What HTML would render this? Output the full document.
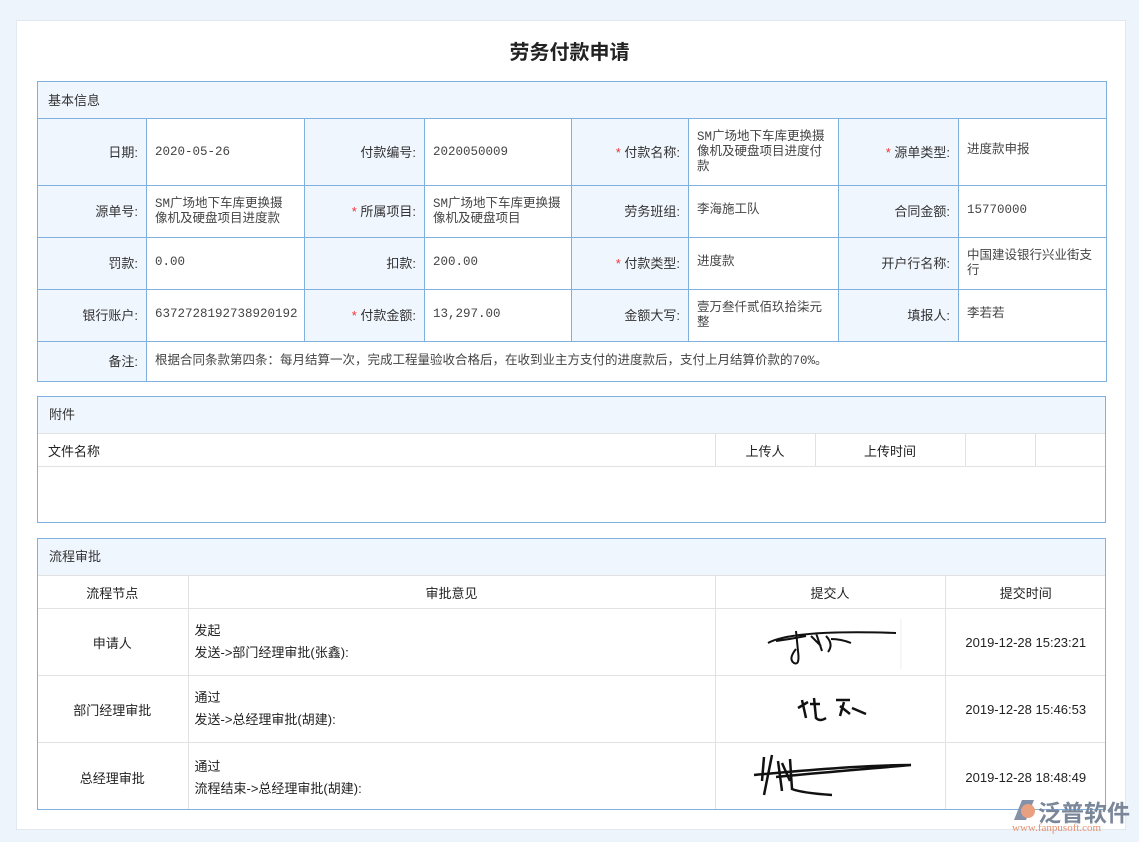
<!DOCTYPE html>
<html><head><meta charset="utf-8"><style>
*{margin:0;padding:0;box-sizing:border-box}
body{width:1139px;height:842px;background:#eef4fc;font-family:"Liberation Sans","Noto Sans CJK SC",sans-serif;font-size:12px;color:#333;position:relative;overflow:hidden}
.card{position:absolute;left:16px;top:20px;width:1110px;height:810px;background:#fff;border:1px solid #e2e8f0}
h1{position:absolute;left:0;top:36px;width:1139px;text-align:center;font-size:20px;font-weight:bold;color:#222;font-family:"Noto Sans CJK SC",sans-serif}
.a{position:absolute}
table{border-collapse:collapse;table-layout:fixed;position:absolute}
.b td{border:1px solid #7fb0de;vertical-align:middle;font-size:13px;line-height:15px;overflow:hidden}
.b td.l{background:#f0f6fe;text-align:right;padding-right:8px;color:#333}
.b td.v{padding:0 10px 0 8px;color:#444;font-family:"Liberation Mono","Noto Sans CJK SC",monospace;font-size:12.5px}
.b td.h{background:#f0f6fe;padding-left:10px;height:37px;color:#333}
.r{color:#e33}
.box{position:absolute;left:37px;width:1069px;border:1px solid #7fb0de;overflow:hidden}
.box .hd{height:37px;background:#f0f6fe;padding-left:11px;line-height:36px;border-bottom:1px solid #e2e2e2;font-size:13px}
.g td{border:1px solid #e2e2e2;font-size:13px;color:#222}
</style></head><body>
<div class="card"></div>
<h1>劳务付款申请</h1>
<table class="b" style="left:37px;top:81px;width:1069px">
<colgroup><col style="width:109px"><col style="width:158px"><col style="width:120px"><col style="width:147px"><col style="width:117px"><col style="width:150px"><col style="width:120px"><col style="width:148px"></colgroup>
<tr><td class="h" colspan="8">基本信息</td></tr>
<tr style="height:67px"><td class="l">日期:</td><td class="v">2020-05-26</td><td class="l">付款编号:</td><td class="v">2020050009</td><td class="l"><span class="r">*</span> 付款名称:</td><td class="v">SM广场地下车库更换摄像机及硬盘项目进度付款</td><td class="l"><span class="r">*</span> 源单类型:</td><td class="v" style="vertical-align:top;padding-top:24px">进度款申报</td></tr>
<tr style="height:52px"><td class="l">源单号:</td><td class="v">SM广场地下车库更换摄像机及硬盘项目进度款</td><td class="l"><span class="r">*</span> 所属项目:</td><td class="v">SM广场地下车库更换摄像机及硬盘项目</td><td class="l">劳务班组:</td><td class="v" style="vertical-align:top;padding-top:17px">李海施工队</td><td class="l">合同金额:</td><td class="v" style="vertical-align:top;padding-top:17px">15770000</td></tr>
<tr style="height:52px"><td class="l">罚款:</td><td class="v" style="vertical-align:top;padding-top:17px">0.00</td><td class="l">扣款:</td><td class="v" style="vertical-align:top;padding-top:17px">200.00</td><td class="l"><span class="r">*</span> 付款类型:</td><td class="v" style="vertical-align:top;padding-top:17px">进度款</td><td class="l">开户行名称:</td><td class="v">中国建设银行兴业街支行</td></tr>
<tr style="height:52px"><td class="l">银行账户:</td><td class="v" style="vertical-align:top;padding-top:17px">6372728192738920192</td><td class="l"><span class="r">*</span> 付款金额:</td><td class="v" style="vertical-align:top;padding-top:17px">13,297.00</td><td class="l">金额大写:</td><td class="v">壹万叁仟贰佰玖拾柒元整</td><td class="l">填报人:</td><td class="v" style="vertical-align:top;padding-top:17px">李若若</td></tr>
<tr style="height:40px"><td class="l">备注:</td><td class="v" colspan="7">根据合同条款第四条：每月结算一次，完成工程量验收合格后，在收到业主方支付的进度款后，支付上月结算价款的70%。</td></tr>
</table>

<div class="box" style="top:396px;height:127px">
<div class="hd">附件</div>
<table class="g" style="left:-1px;top:36px;width:1069px"><colgroup><col style="width:678px"><col style="width:100px"><col style="width:150px"><col style="width:70px"><col style="width:71px"></colgroup>
<tr style="height:33px"><td style="padding-left:11px;border-left:none">文件名称</td><td style="text-align:center">上传人</td><td style="text-align:center">上传时间</td><td></td><td style="border-right:none"></td></tr></table>
</div>

<div class="box" style="top:538px;height:272px">
<div class="hd">流程审批</div>
<table class="g" style="left:-1px;top:36px;width:1069px"><colgroup><col style="width:151px"><col style="width:527px"><col style="width:230px"><col style="width:161px"></colgroup>
<tr style="height:33px;text-align:center"><td style="border-left:none">流程节点</td><td>审批意见</td><td>提交人</td><td style="border-right:none">提交时间</td></tr>
<tr style="height:67px"><td style="text-align:center;border-left:none">申请人</td><td style="padding-left:6px;line-height:22px">发起<br>发送-&gt;部门经理审批(张鑫):</td><td><svg width="230" height="60"><path d="M52 32 C70 22 120 20 180 22 M60 30 Q75 28 90 25 M80 20 L82 40 Q84 55 78 52 Q72 48 80 38 M95 25 l10 10 M100 22 l6 18 M110 25 q8 8 2 16 M115 28 q10 0 20 4" stroke="#111" stroke-width="2" fill="none"/><line x1="185" y1="8" x2="185" y2="58" stroke="#eee"/></svg></td><td style="text-align:center;border-right:none;font-family:'Liberation Sans',sans-serif">2019-12-28 15:23:21</td></tr>
<tr style="height:67px"><td style="text-align:center;border-left:none">部门经理审批</td><td style="padding-left:6px;line-height:22px">通过<br>发送-&gt;总经理审批(胡建):</td><td><svg width="230" height="60"><path d="M82 30 l10-6 M86 22 l4 18 M94 26 l10 0 M98 20 l2 20 q4 4 10 0 M120 22 l14 0 M124 28 l10 8 M128 24 l-4 14 M136 30 l14 6" stroke="#111" stroke-width="2.5" fill="none"/></svg></td><td style="text-align:center;border-right:none;font-family:'Liberation Sans',sans-serif">2019-12-28 15:46:53</td></tr>
<tr style="height:67px"><td style="text-align:center;border-left:none">总经理审批</td><td style="padding-left:6px;line-height:22px">通过<br>流程结束-&gt;总经理审批(胡建):</td><td><svg width="230" height="66"><path d="M38 32 C80 28 150 22 195 22 C150 26 100 30 60 34 M48 14 l-2 24 M56 12 l-8 40 M62 18 l4 30 M66 20 l8 18 M74 16 l2 30 q10 4 40 6" stroke="#111" stroke-width="2.5" fill="none"/></svg></td><td style="text-align:center;border-right:none;font-family:'Liberation Sans',sans-serif">2019-12-28 18:48:49</td></tr>
</table>
</div>

<div class="a" style="left:1008px;top:794px;width:130px;height:44px">
<svg class="a" style="left:2px;top:2px" width="28" height="28"><path d="M4 24 L12 4 L24 4 L16 24Z" fill="#8591a8"/><circle cx="18" cy="15" r="7" fill="#e8a080"/></svg>
<div class="a" style="left:30px;top:0px;font-size:23px;color:#7a8699;font-weight:bold;white-space:nowrap">泛普软件</div>
<div class="a" style="left:4px;top:28px;font-size:11px;color:#e39070;font-family:'Liberation Serif',serif;white-space:nowrap">www.fanpusoft.com</div>
</div>
</body></html>
